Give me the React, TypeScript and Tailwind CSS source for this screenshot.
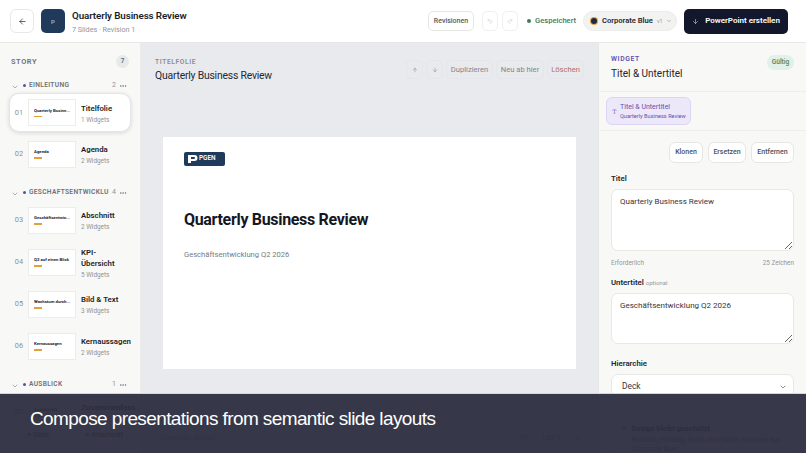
import { ArrowLeft, ArrowUp, ArrowDown, ChevronDown, Check, Ellipsis, Plus, Redo2, Undo2, Type, Minus, Hash } from 'lucide-react';

const SECTIONS = [
  {
    name: 'EINLEITUNG',
    count: 2,
    slides: [
      { no: '01', thumb: 'Quarterly Busine...', title: 'Titelfolie', sub: '1 Widgets', active: true },
      { no: '02', thumb: 'Agenda', title: 'Agenda', sub: '2 Widgets' },
    ],
  },
  {
    name: 'GESCHÄFTSENTWICKLUNG',
    count: 4,
    slides: [
      { no: '03', thumb: 'Geschäftsentwic...', title: 'Abschnitt', sub: '2 Widgets' },
      { no: '04', thumb: 'Q2 auf einen Blick', title: 'KPI-Übersicht', sub: '5 Widgets' },
      { no: '05', thumb: 'Wachstum durch...', title: 'Bild & Text', sub: '3 Widgets' },
      { no: '06', thumb: 'Kernaussagen', title: 'Kernaussagen', sub: '2 Widgets' },
    ],
  },
  {
    name: 'AUSBLICK',
    count: 1,
    slides: [{ no: '07', thumb: 'Ausblick Q3', title: 'Zusammenfass...', sub: '2 Widgets' }],
  },
];

function SlideRow({ no, thumb, title, sub, active }: { no: string; thumb: string; title: string; sub: string; active?: boolean }) {
  return (
    <div className={`flex items-center rounded-[10px] border pl-[2px] ${active ? 'h-[39px] bg-white border-[#e4e5e8] shadow-[0_1px_4px_rgba(20,24,40,0.14)]' : 'h-[40px] border-transparent'}`}>
      <span className="w-[14px] mr-[2px] text-[7.4px] text-[#8d9097] text-center">{no}</span>
      <div className="w-[48px] h-[27px] shrink-0 bg-white border border-[#ececea] flex flex-col justify-center pl-[5px] pr-[2px]">
        <span className="text-[4.3px] leading-[6px] font-bold text-[#23262e] whitespace-nowrap overflow-hidden">{thumb}</span>
        <span className="w-[8px] h-[1.5px] mt-[2px] bg-[#e0a040]" />
      </div>
      <div className="ml-[5px] mt-[2px] w-[46px]">
        <div className="text-[7.8px] leading-[11px] font-semibold text-[#1c1f28]">{title}</div>
        <div className="text-[6.4px] leading-[9px] mt-[2px] text-[#8f9298]">{sub}</div>
      </div>
    </div>
  );
}

function ToolButton({ children, className }: { children: React.ReactNode; className?: string }) {
  return (
    <button className={`h-[19px] flex items-center justify-center rounded-[5px] border border-[#e5e6e9] bg-[#e9eaed] text-[7.6px] ${className ?? 'text-[#83868d]'}`}>
      {children}
    </button>
  );
}

function SmallButton({ label, className }: { label: string; className: string }) {
  return (
    <button className={`h-[21px] rounded-[6px] border border-[#e6e6e3] bg-white text-[7px] font-medium text-[#4d5058] ${className}`}>
      {label}
    </button>
  );
}

export default function App() {
  return (
    <div className="relative w-[806px] h-[453px] overflow-hidden flex flex-col bg-white font-['Roboto',sans-serif]">
      {/* Header */}
      <header className="h-[43px] shrink-0 flex items-center border-b border-[#e7e7e5] bg-white pl-[10px] pr-[18px]">
        <button className="w-[24px] h-[24px] flex items-center justify-center rounded-[6px] border border-[#e8e8e8] text-[#30333b]">
          <ArrowLeft size={9} strokeWidth={2} />
        </button>
        <div className="ml-[7px] w-[24px] h-[24px] rounded-[5px] bg-[#1f3a5b] flex items-center justify-center text-[6px] font-semibold text-[#9db0c7]">P</div>
        <div className="ml-[7px]">
          <div className="text-[9.8px] leading-[13px] font-semibold tracking-[-0.01em] text-[#1b1e28]">Quarterly Business Review</div>
          <div className="text-[7.2px] leading-[9px] mt-[3px] text-[#92959b]">7 Slides · Revision 1</div>
        </div>
        <div className="flex-1" />
        <button className="w-[46px] h-[20px] rounded-[5px] border border-[#e6e6e4] text-[7px] font-medium text-[#565961]">Revisionen</button>
        <button className="ml-[8px] w-[16px] h-[20px] flex items-center justify-center rounded-[5px] border border-[#f0f0ee] text-[#c6c7ca]"><Undo2 size={6} /></button>
        <button className="ml-[4px] w-[16px] h-[20px] flex items-center justify-center rounded-[5px] border border-[#f0f0ee] text-[#c6c7ca]"><Redo2 size={6} /></button>
        <span className="ml-[9px] w-[4px] h-[4px] rounded-full bg-[#3f7a5e]" />
        <span className="ml-[4px] w-[40px] whitespace-nowrap text-[7.6px] font-medium text-[#3f7a5e]">Gespeichert</span>
        <div className="ml-[8px] w-[94px] h-[20px] flex items-center rounded-full bg-[#f2f2f1] border border-[#ececea] pl-[7px]">
          <span className="w-[6px] h-[6px] rounded-full bg-[#1f2a3f] ring-1 ring-[#e0a040]" />
          <span className="ml-[5px] text-[7.6px] font-semibold text-[#262932]">Corporate Blue</span>
          <span className="ml-[4px] text-[5.6px] text-[#9a9ca1]">v1</span>
          <ChevronDown size={6} className="ml-[3px] text-[#777a80]" />
        </div>
        <button className="ml-[7px] w-[104px] h-[25px] flex items-center justify-center rounded-[5px] bg-[#12172b] text-white text-[8px] font-semibold">
          <ArrowDown size={7} className="mr-[6px] text-[#c9cbd2]" />
          PowerPoint erstellen
        </button>
      </header>

      <div className="flex-1 min-h-0 flex">
        {/* Story sidebar */}
        <aside className="w-[141px] shrink-0 flex flex-col bg-[#f8f8f6] border-r border-[#ececea]">
          <div className="h-[37px] shrink-0 flex items-center justify-between pl-[11px] pr-[11px]">
            <span className="text-[7.4px] font-semibold tracking-[0.08em] text-[#6d7077]">STORY</span>
            <span className="w-[13px] h-[13px] rounded-full bg-[#e8e9eb] flex items-center justify-center text-[6.4px] font-semibold text-[#62656c]">7</span>
          </div>
          <div className="flex-1 min-h-0 overflow-hidden">
            {SECTIONS.map(section => (
              <section key={section.name} className="mb-[13px]">
                <div className="h-[11px] flex items-center pl-[11px] pr-[13px]">
                  <ChevronDown size={8} className="shrink-0 text-[#8b8e94] mt-[3px]" />
                  <span className="ml-[4px] w-[3px] h-[3px] shrink-0 rounded-full bg-[#5a4fa8]" />
                  <span className="ml-[3px] flex-1 min-w-0 overflow-hidden whitespace-nowrap text-[6.6px] font-semibold tracking-[0.05em] text-[#6d7077]">{section.name}</span>
                  <span className="ml-[3px] text-[7px] text-[#8f9298]">{section.count}</span>
                  <Ellipsis size={8} className="ml-[3px] shrink-0 text-[#6d7077]" />
                </div>
                <div className="mt-[2px] mx-[9px] flex flex-col gap-[2px]">
                  {section.slides.map(slide => (
                    <SlideRow key={slide.no} {...slide} />
                  ))}
                </div>
              </section>
            ))}
          </div>
          <div className="h-[20px] mb-[8px] shrink-0 flex items-center pl-[27px] gap-[36px] text-[7.4px] font-medium text-[#4d5058]">
            <span>+ Slide</span>
            <span>+ Abschnitt</span>
          </div>
        </aside>

        {/* Editor */}
        <main className="flex-1 min-w-0 flex flex-col bg-[#e9eaed]">
          <div className="h-[46px] shrink-0 flex items-start justify-between pl-[14px] pr-[14px] pt-[15px]">
            <div>
              <div className="text-[6.6px] leading-[8px] font-semibold tracking-[0.1em] text-[#8a8d94]">TITELFOLIE</div>
              <div className="mt-[2px] text-[10.4px] leading-[15px] tracking-[-0.02em] text-[#252832]">Quarterly Business Review</div>
            </div>
            <div className="flex items-center gap-[3px] pt-[2px]">
              <ToolButton className="w-[17px] text-[#83868d]"><ArrowUp size={6} /></ToolButton>
              <ToolButton className="w-[17px] text-[#83868d]"><ArrowDown size={6} /></ToolButton>
              <ToolButton className="w-[47px] text-[#83868d]">Duplizieren</ToolButton>
              <ToolButton className="w-[48px] text-[#83868d]">Neu ab hier</ToolButton>
              <ToolButton className="w-[37px] text-[#b56a6a]">Löschen</ToolButton>
            </div>
          </div>
          <div className="flex-1 min-h-0 flex items-start justify-center pt-[48px]">
            <div className="w-[413px] h-[232px] bg-white pl-[21px] pt-[15px]">
              <div className="w-[41px] h-[14px] rounded-[2px] bg-[#1f3a5b] flex items-center pl-[4px]">
                <svg width="10" height="10" viewBox="0 0 10 10">
                  <path d="M0 1h6.5a3 3 0 0 1 0 6H3v2H0z M3 3v2h3a1 1 0 0 0 0-2z" fill="#fff" fillRule="evenodd" />
                </svg>
                <span className="ml-[1px] text-[6.4px] font-semibold text-white">PGEN</span>
              </div>
              <div className="mt-[42px] text-[16px] leading-[24px] font-bold tracking-[-0.02em] text-[#14171f]">Quarterly Business Review</div>
              <div className="mt-[18px] text-[7.6px] leading-[10px] text-[#777a80]">Geschäftsentwicklung Q2 2026</div>
            </div>
          </div>
          <div className="h-[30px] shrink-0 flex items-center justify-between pl-[9px] pr-[17px] text-[7.4px] text-[#8a8d94]">
            <span className="flex items-center gap-[3px]"><Check size={7} />Vorschau aktuell</span>
            <span className="flex items-center gap-[13px]"><Minus size={7} /><span>Fit</span><span>100 %</span><Plus size={7} /></span>
          </div>
        </main>

        {/* Widget panel */}
        <aside className="w-[208px] shrink-0 flex flex-col bg-[#f8f8f6] border-l border-[#e7e7e5]">
          <div className="h-[49px] shrink-0 flex justify-between border-b border-[#eeeeec] pl-[12px] pr-[12px] pt-[12px]">
            <div>
              <div className="text-[6.8px] leading-[8px] font-semibold tracking-[0.09em] text-[#5f50ad]">WIDGET</div>
              <div className="mt-[3px] text-[10px] leading-[15px] text-[#23262f]">Titel & Untertitel</div>
            </div>
            <span className="w-[27px] h-[15px] rounded-full bg-[#dff1e8] flex items-center justify-center text-[6.6px] font-semibold text-[#5b8a73]">Gültig</span>
          </div>
          <div className="h-[39px] shrink-0 flex items-start border-b border-[#eeeeec] pl-[7px] pt-[5px]">
            <div className="w-[85px] h-[28px] flex items-center rounded-[6px] bg-[#ece8fa] border border-[#dcd6f3] pl-[5px] text-[#5f50ad]">
              <Type size={5} />
              <div className="ml-[3px] min-w-0">
                <div className="text-[7px] leading-[9px]">Titel & Untertitel</div>
                <div className="text-[5.6px] leading-[7px] mt-[1px] whitespace-nowrap">Quarterly Business Review</div>
              </div>
            </div>
          </div>
          <div className="flex-1 min-h-0 overflow-hidden pl-[12px] pr-[12px] pt-[11px]">
            <div className="flex justify-end gap-[5px]">
              <SmallButton label="Klonen" className="w-[34px]" />
              <SmallButton label="Ersetzen" className="w-[38px]" />
              <SmallButton label="Entfernen" className="w-[43px]" />
            </div>
            <label className="block mt-[11px] text-[7.8px] leading-[10px] font-semibold text-[#23262f]">Titel</label>
            <textarea
              readOnly
              defaultValue="Quarterly Business Review"
              className="block mt-[5px] w-full h-[62px] rounded-[7px] border border-[#e8e8e6] bg-white px-[8px] pt-[6px] pb-[7px] text-[8px] leading-[11px] text-[#33363e] outline-none"
            />
            <div className="mt-[8px] flex justify-between text-[6.4px] leading-[8px] text-[#94979c]">
              <span>Erforderlich</span>
              <span>25 Zeichen</span>
            </div>
            <label className="block mt-[11px] text-[7.8px] leading-[10px] font-semibold text-[#23262f]">
              Untertitel <span className="text-[6px] font-normal text-[#94979c]">optional</span>
            </label>
            <textarea
              readOnly
              defaultValue="Geschäftsentwicklung Q2 2026"
              className="block mt-[5px] w-full h-[51px] rounded-[7px] border border-[#e8e8e6] bg-white px-[8px] pt-[6px] pb-[7px] text-[8px] leading-[11px] text-[#33363e] outline-none"
            />
            <label className="block mt-[15px] text-[7.8px] leading-[10px] font-semibold text-[#23262f]">Hierarchie</label>
            <div className="mt-[5px] h-[25px] flex items-center justify-between rounded-[7px] border border-[#e8e8e6] bg-white pl-[10px] pr-[6px] text-[8.4px] text-[#33363e]">
              Deck
              <ChevronDown size={8} className="text-[#55585f]" />
            </div>
            <div className="mt-[14px] flex rounded-[5px] border border-[#e8e8e6] pl-[9px] pt-[10px] pb-[7px]">
              <Hash size={7} className="mt-[1px] text-[#5d6068]" />
              <div className="ml-[5px]">
                <div className="text-[7.4px] leading-[9px] font-semibold text-[#33363e]">Design bleibt geschützt</div>
                <div className="mt-[3px] text-[6.8px] leading-[9px] text-[#73767d]">Position, Padding, Fonts und Farben kommen aus Corporate Blue.</div>
              </div>
            </div>
          </div>
        </aside>
      </div>

      {/* Caption overlay */}
      <div className="absolute left-0 right-0 bottom-0 h-[60px] bg-[#2c2d3f]/95 border-t border-[#d5d6da] flex items-center pl-[30px]">
        <span className="font-['Liberation_Sans',sans-serif] text-[19px] leading-[26px] tracking-[-0.032em] text-white -mt-[10px]">Compose presentations from semantic slide layouts</span>
      </div>
    </div>
  );
}
